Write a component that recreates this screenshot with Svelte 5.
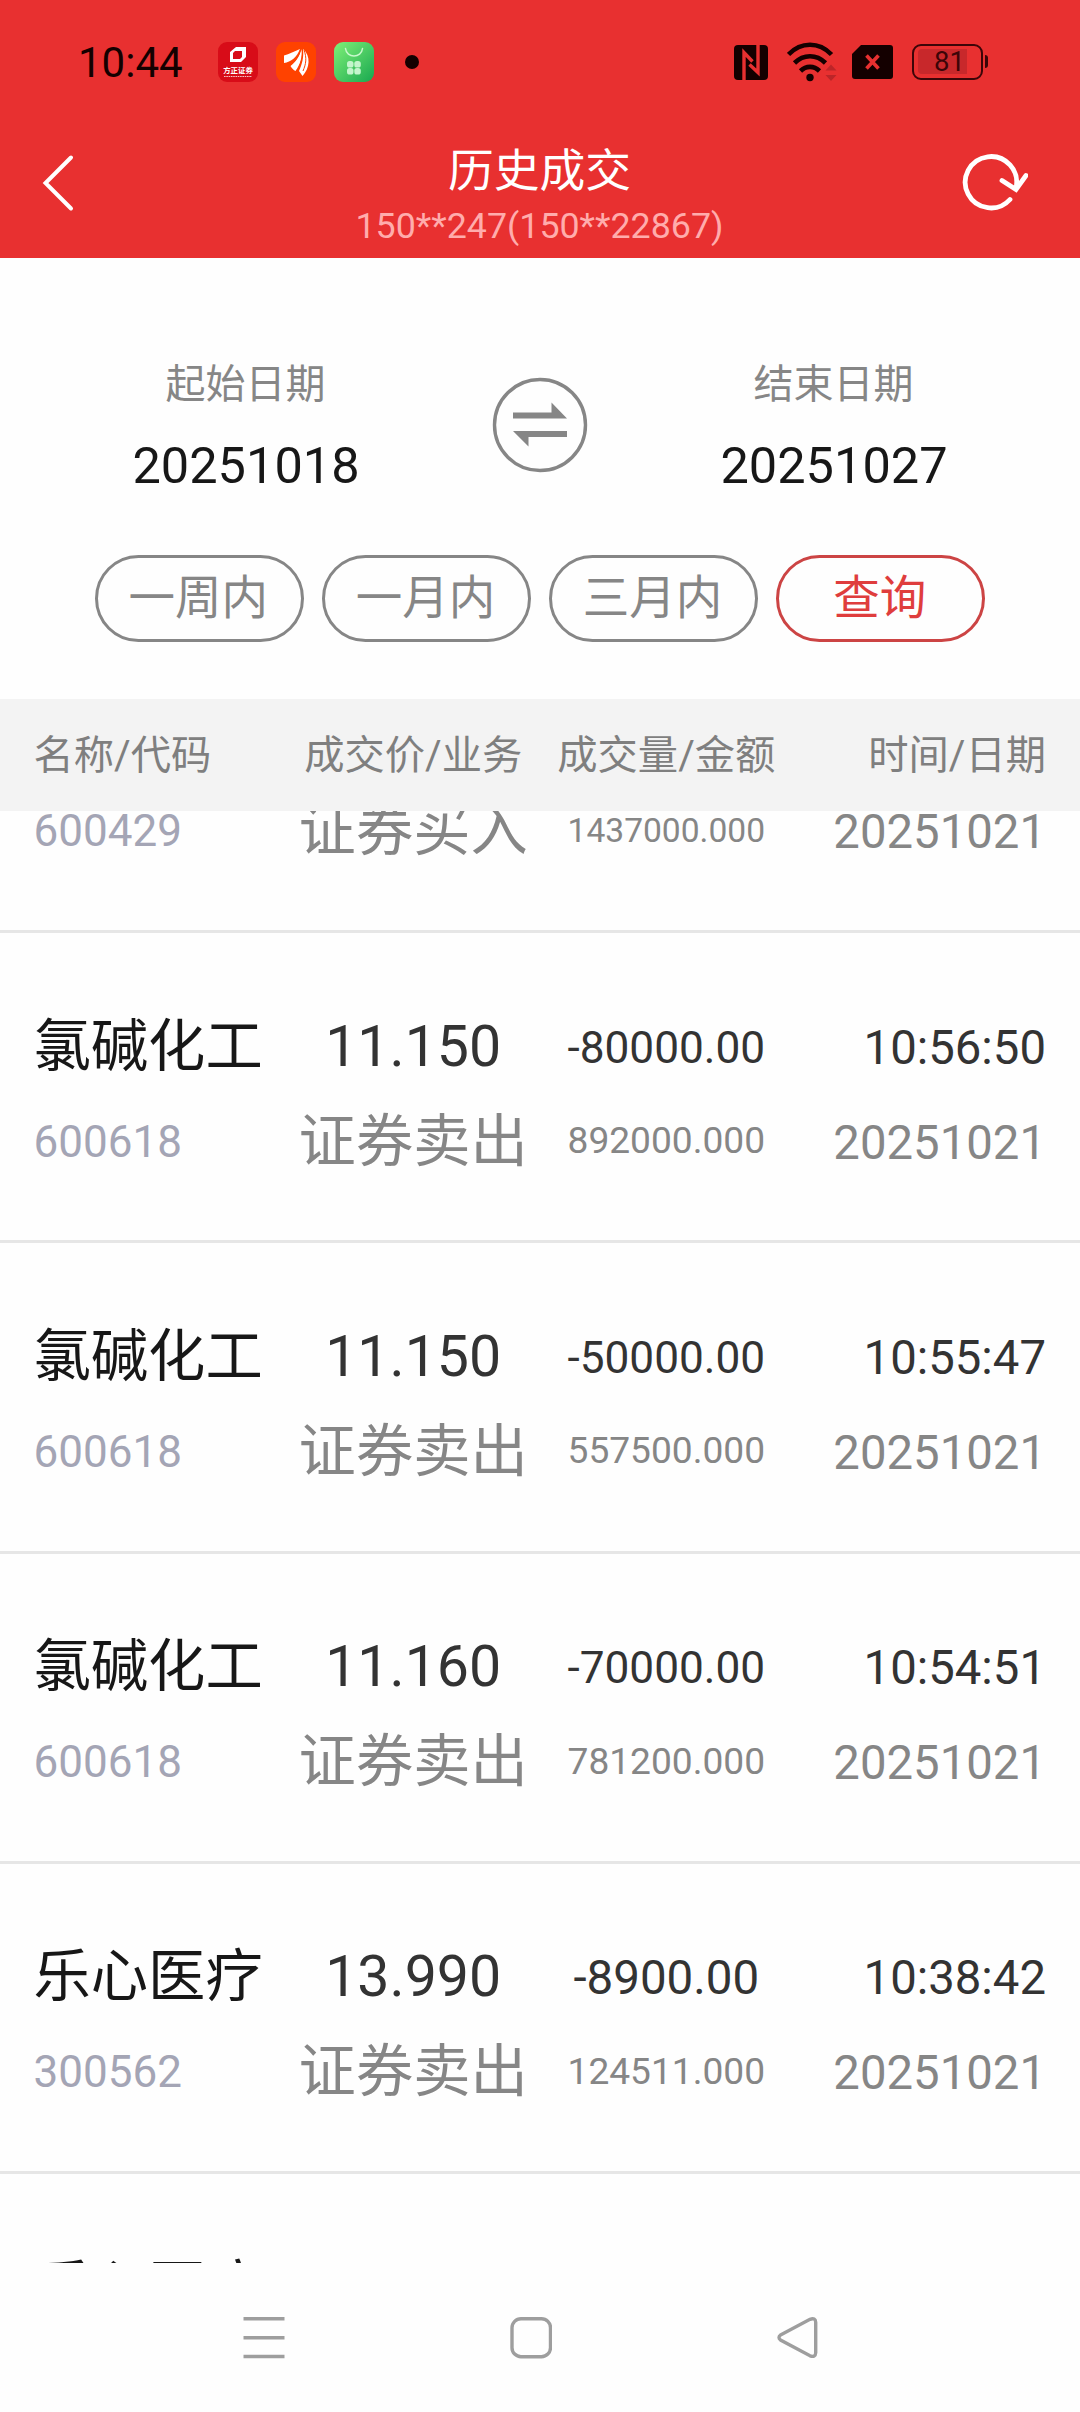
<script lang="ts">
	type Trade = {
		name: string;
		code: string;
		price: string;
		action: string;
		volume: string;
		amount: string;
		time: string;
		date: string;
	};

	const ranges = ["一周内", "一月内", "三月内"];
	const columns = ["名称/代码", "成交价/业务", "成交量/金额", "时间/日期"];

	const trades: Trade[] = [
		{ name: "", code: "600429", price: "", action: "证券买入", volume: "", amount: "1437000.000", time: "", date: "20251021" },
		{ name: "氯碱化工", code: "600618", price: "11.150", action: "证券卖出", volume: "-80000.00", amount: "892000.000", time: "10:56:50", date: "20251021" },
		{ name: "氯碱化工", code: "600618", price: "11.150", action: "证券卖出", volume: "-50000.00", amount: "557500.000", time: "10:55:47", date: "20251021" },
		{ name: "氯碱化工", code: "600618", price: "11.160", action: "证券卖出", volume: "-70000.00", amount: "781200.000", time: "10:54:51", date: "20251021" },
		{ name: "乐心医疗", code: "300562", price: "13.990", action: "证券卖出", volume: "-8900.00", amount: "124511.000", time: "10:38:42", date: "20251021" },
		{ name: "乐心医疗", code: "", price: "", action: "", volume: "", amount: "", time: "", date: "" },
	];

	// shrink long numbers so they stay inside their column
	function fit(text: string, max: number) {
		const ems = [...text].reduce((sum, c) => sum + (c === "." ? 0.263 : c === "-" ? 0.276 : 0.5615), 0);
		return ems ? Math.min(max, 197.5 / ems) : max;
	}
</script>

<div class="screen">
	<header>
		<div class="status">
			<span class="clock">10:44</span>
			<div class="apps">
				<svg width="40" height="40" viewBox="0 0 40 40">
					<rect width="40" height="40" rx="9" fill="#d80c18" />
					<path fill="#fff" fill-rule="evenodd" d="M18 5h10v10l-5 5H12V10zM17 9l-2 2v6h7l2-2V9z" />
					<text class="brand" x="20" y="31">方正证券</text>
					<path d="M6 34.500h28" stroke="#fff" stroke-width="1.200" stroke-dasharray="1.600 .7" opacity=".75" />
				</svg>
				<svg width="40" height="40" viewBox="0 0 40 40">
					<rect width="40" height="40" rx="9" fill="#ff4200" />
					<path fill="#fff" d="M24 7C19 9 13 12 8 13.500v7.500c7-1 13-6 16-14z" />
					<path fill="#fff" d="M25.500 7c-2 8-6 13-11 17 1.500 2.500 3 4 5 5C24 24 27 15 25.500 7z" />
					<path fill="#fff" d="M27 7c1 9-1 15-4 22l3.500 5C34 26 35 14 27 7z" />
					<path d="M24.700 7c-2 7-5 12-11 16.500M26.200 7c1 8-2 16-6 22M28 8c3 8 2 14-1 21" fill="none" stroke="#ff4200" />
				</svg>
				<svg width="40" height="40" viewBox="0 0 40 40">
					<defs>
						<linearGradient id="leaf" x1="0" y1="0" x2="1" y2="1">
							<stop offset="0" stop-color="#80f078" />
							<stop offset="1" stop-color="#18a850" />
						</linearGradient>
					</defs>
					<rect width="40" height="40" rx="9" fill="url(#leaf)" />
					<path d="M11.500 6.500c1 10 16 10 17 0" fill="none" stroke="#c8f8cc" stroke-width="1.500" stroke-linecap="round" />
					<g fill="#c4f5cc">
						<rect x="13" y="19" width="6.500" height="6.500" rx="2.600" />
						<rect x="20.300" y="19" width="6.500" height="6.500" rx="2.600" />
						<rect x="13" y="26" width="6.500" height="6.500" rx="2.600" />
						<rect x="20.300" y="26" width="6.500" height="6.500" rx="2.600" />
					</g>
				</svg>
			</div>
			<span class="dot"></span>

			<div class="system">
				<svg width="34" height="35" viewBox="0 0 34 35">
					<rect width="34" height="35" rx="4" fill="#140000" />
					<path d="M10 35V7.500L18.500 16.500M24 0v27.500L15.500 19.500" fill="none" stroke="#e83030" stroke-width="3.400" />
				</svg>
				<svg class="wifi" width="50" height="40" viewBox="0 0 50 40">
					<g fill="none" stroke="#140000" stroke-width="4.600">
						<path d="M1.500 12.500C14-.5 32-.5 44.500 12.500" />
						<path d="M7.500 21c9-9 22-9 31 0" />
						<path d="M13.500 29c5.500-5.500 13.500-5.500 19 0" />
					</g>
					<circle cx="23" cy="35.500" r="3.700" fill="#140000" />
					<path d="M38.500 28.500l5.500-6 5.500 6zM38.500 33h11l-5.500 6z" fill="#bc2528" />
				</svg>
				<svg width="41" height="34" viewBox="0 0 41 34">
					<path d="M9 0h29a3 3 0 0 1 3 3v28a3 3 0 0 1-3 3H3a3 3 0 0 1-3-3V9z" fill="#140000" />
					<path d="M14.500 10.500l12 13M26.500 10.500l-12 13" stroke="#e83030" stroke-width="3.600" />
				</svg>
				<div class="battery"><span>81</span></div>
			</div>
		</div>

		<div class="titlebar">
			<svg width="34" height="60" viewBox="0 0 34 60">
				<path d="M30 4.500L4.500 30 30 55.500" fill="none" stroke="#fff" stroke-width="4" stroke-linecap="round" />
			</svg>
			<div class="heading">
				<h1>历史成交</h1>
				<p>150**247(150**22867)</p>
			</div>
			<svg width="66" height="60" viewBox="0 0 66 60">
				<g fill="none" stroke="#fff" stroke-width="4.800" stroke-linecap="round">
					<path d="M48 46.500A25.700 25.700 0 1 1 54 35" />
					<path d="M40 27.500L54 36.500 64 22.500" />
				</g>
			</svg>
		</div>
	</header>

	<section class="dates">
		<div class="date">
			<span class="label">起始日期</span>
			<span class="value">20251018</span>
		</div>
		<svg width="96" height="96" viewBox="0 0 96 96">
			<circle cx="48" cy="48" r="45.500" fill="none" stroke="#868686" stroke-width="3.400" />
			<path d="M21 35.500h38.500V25.500L75 41.500H21zM75 60H36.500v9.500L21 54h54z" fill="#868686" />
		</svg>
		<div class="date">
			<span class="label">结束日期</span>
			<span class="value">20251027</span>
		</div>
	</section>

	<section class="filters">
		{#each ranges as range}
			<button>{range}</button>
		{/each}
		<button class="query">查询</button>
	</section>

	<div class="columns">
		{#each columns as column}
			<span>{column}</span>
		{/each}
	</div>

	<div class="list">
		{#each trades as trade}
			<div class="trade">
				<span class="name">{trade.name}</span>
				<span class="price">{trade.price}</span>
				<span class="volume" style:font-size="{fit(trade.volume, 47.5)}px">{trade.volume}</span>
				<span class="time">{trade.time}</span>
				<span class="code">{trade.code}</span>
				<span class="action">{trade.action}</span>
				<span class="amount" style:font-size="{fit(trade.amount, 47.5)}px">{trade.amount}</span>
				<span class="time muted">{trade.date}</span>
			</div>
		{/each}
	</div>

	<nav>
		<svg width="42" height="42" viewBox="0 0 42 42">
			<path d="M.5 1.700h41M.5 20.700h41M.5 39.500h41" />
		</svg>
		<svg width="42" height="42" viewBox="0 0 42 42">
			<rect x="2" y="1.700" width="38.500" height="38" rx="9" />
		</svg>
		<svg width="42" height="42" viewBox="0 0 42 42">
			<path d="M3.500 18L33 2.300q5.500-2 5.700 3v30.500q-.2 5-5.700 3L3.500 23q-3-2.500 0-5z" />
		</svg>
	</nav>
</div>

<style>
	:global(body) {
		background: #fefefe;
	}

	.screen {
		width: 1080px;
		height: 2412px;
		display: flex;
		flex-direction: column;
		overflow: hidden;
		font-family: Roboto, "Noto Sans CJK SC", sans-serif;
		color: #333;
	}

	header {
		height: 258px;
		flex: none;
		background: #e83030;
	}

	.status {
		height: 124px;
		padding: 0 97px 0 78px;
		display: flex;
		align-items: center;
		color: #140000;
	}

	.clock {
		width: 140px;
		padding-top: 1px;
		box-sizing: border-box;
		font-size: 42px;
	}

	.apps {
		display: flex;
		gap: 18px;
	}

	.brand {
		font-size: 7.4px;
		font-weight: 700;
		fill: #fff;
		text-anchor: middle;
	}

	.dot {
		width: 14px;
		height: 14px;
		margin-left: 31px;
		border-radius: 50%;
		background: #140000;
	}

	.system {
		margin-left: auto;
		display: flex;
		align-items: center;
	}

	.wifi {
		margin: 0 15px 0 19px;
	}

	.battery {
		position: relative;
		box-sizing: border-box;
		width: 71px;
		height: 36px;
		margin-left: 19px;
		padding: 3px 4px;
		border: 2.5px solid #3c0508;
		border-radius: 9px;

		& span {
			display: block;
			width: 49px;
			height: 25px;
			padding-left: 16px;
			box-sizing: border-box;
			border-radius: 4px 0 0 4px;
			background: #c8282b;
			font-size: 27.5px;
			line-height: 26px;
			color: #3c0508;
		}

		&::after {
			content: "";
			position: absolute;
			top: 9px;
			right: -7px;
			width: 3px;
			height: 13px;
			border-radius: 0 3px 3px 0;
			background: #3c0508;
		}
	}

	.titlebar {
		height: 134px;
		padding: 0 52px 0 41px;
		display: flex;
		align-items: flex-start;
		justify-content: space-between;

		& svg {
			margin-top: 28.5px;
		}
	}

	.heading {
		margin-left: 42px;
		text-align: center;

		& h1 {
			margin: 23px 0 0;
			font-size: 45.8px;
			font-weight: 400;
			line-height: 50px;
			color: #fff;
		}

		& p {
			margin: 8px 0 0;
			font-size: 35.8px;
			line-height: 42px;
			color: #ffacac;
		}
	}

	.dates {
		height: 297px;
		flex: none;
		display: grid;
		grid-template-columns: 1fr 96px 1fr;

		& svg {
			margin-top: 119px;
		}
	}

	.date {
		padding-top: 97px;
		display: flex;
		flex-direction: column;
		align-items: center;

		& .label {
			margin-right: 1px;
			font-size: 40px;
			line-height: 60px;
			color: #868686;
		}

		& .value {
			margin-top: 21px;
			font-size: 50.5px;
			line-height: 60px;
			color: #171717;
		}
	}

	.filters {
		height: 144px;
		flex: none;
		display: flex;
		align-items: flex-start;
		justify-content: center;
		gap: 18px;

		& button {
			width: 209.2px;
			height: 87px;
			padding: 0 2px 1px 0;
			border: 3px solid #868686;
			border-radius: 44px;
			background: none;
			font: inherit;
			font-size: 46.5px;
			line-height: 76px;
			color: #868686;
		}

		& .query {
			border-color: #cc4444;
			color: #df3d3d;
		}
	}

	.columns,
	.trade {
		display: grid;
		grid-template-columns: repeat(4, 1fr);
		padding: 0 34px 0 33.5px;
		text-align: center;
		white-space: nowrap;

		& span:nth-child(4n + 1) {
			text-align: left;
		}

		& span:nth-child(4n) {
			text-align: right;
		}
	}

	.columns {
		height: 112px;
		flex: none;
		background: #f3f3f3;
		font-size: 40.3px;
		line-height: 114px;
		color: #7f7f7f;
	}

	/* scrolled part way into the first row */
	.list {
		height: 1452px;
		flex: none;
		overflow: hidden;

		& .trade:first-child {
			margin-top: -188.25px;
		}
	}

	.trade {
		box-sizing: border-box;
		height: 310.25px;
		padding-top: 66.5px;
		grid-template-rows: 95px 95px;
		line-height: 95px;
		border-bottom: 3px solid #e6e6e6;

		& .name,
		& .price,
		& .action {
			font-size: 57.3px;
		}

		& .name,
		& .price,
		& .action {
			margin-top: -1px;
		}

		& .name {
			color: #171717;
		}

		& .code {
			font-size: 44px;
			color: #a4a5b5;
		}

		& .volume {
			padding-top: 1px;
		}

		& .action,
		& .amount,
		& .muted {
			color: #868686;
		}

		& .amount {
			margin-top: -1.5px;
		}

		& .time {
			padding-top: 1px;
			font-size: 47.3px;
		}
	}

	nav {
		flex: 1;
		padding: 54px 261px 0 243px;
		display: flex;
		align-items: flex-start;
		justify-content: space-between;

		& svg {
			fill: none;
			stroke: #9e9e9e;
			stroke-width: 3.4;
		}
	}
</style>
